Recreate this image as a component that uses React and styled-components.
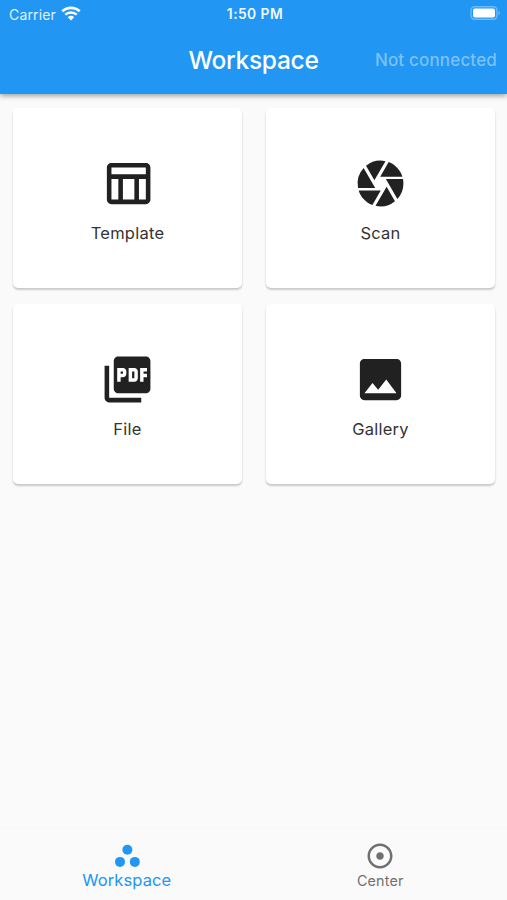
import React from "react";
import styled, { createGlobalStyle } from "styled-components";
import {
  MdOutlineTableChart,
  MdCamera,
  MdPictureAsPdf,
  MdImage,
  MdAdjust,
} from "react-icons/md";

const GlobalStyle = createGlobalStyle`
  * { box-sizing: border-box; }
  body {
    margin: 0;
    background: #fafafa;
    font-family: Inter, "Liberation Sans", sans-serif;
  }
`;

const Screen = styled.div`
  display: flex;
  flex-direction: column;
  width: 100%;
  height: 100vh;
  overflow: hidden;
`;

const Header = styled.header`
  flex: none;
  height: 94px;
  background: #2196f3;
  color: #fff;
  box-shadow: 0 2px 5px rgba(0, 0, 0, 0.36);
`;

const StatusBar = styled.div`
  display: grid;
  grid-template-columns: 1fr auto 1fr;
  align-items: center;
  height: 27px;
  padding: 1px 6px 0 9px;
  font-size: 14px;

  svg {
    margin-bottom: 2px;
  }
`;

const Carrier = styled.div`
  display: flex;
  align-items: center;
  gap: 5px;
  color: #e3f2fe;
  letter-spacing: 0.15px;
`;

const Clock = styled.div`
  color: #f0f8ff;
  font-size: 13.8px;
  font-weight: 600;
  letter-spacing: 0.45px;
`;

const Power = styled.div`
  display: flex;
  justify-content: flex-end;
`;

const TitleBar = styled.div`
  display: grid;
  grid-template-columns: 1fr auto 1fr;
  align-items: center;
  height: 65px;
  padding: 0 10px;
`;

const Title = styled.h1`
  grid-column: 2;
  margin: 0;
  font-size: 24.5px;
  font-weight: 500;
  line-height: 30px;
  letter-spacing: -0.3px;
`;

const Connection = styled.div`
  justify-self: end;
  color: #7dc1f8;
  font-size: 17px;
  font-weight: 500;
  letter-spacing: 0.17px;
  white-space: nowrap;
`;

const Tiles = styled.main`
  flex: 1;
  display: grid;
  grid-template-columns: 1fr 1fr;
  grid-auto-rows: 180px;
  align-content: start;
  gap: 15.5px 24px;
  padding: 14px 12px 0 13px;
`;

const Card = styled.button`
  display: flex;
  flex-direction: column;
  align-items: center;
  border: 0;
  border-radius: 5px;
  padding: 48px 0 0;
  background: #fff;
  color: #212121;
  box-shadow: 0 2px 2px rgba(0, 0, 0, 0.18), 0 1px 3px rgba(0, 0, 0, 0.04);
  font-family: inherit;

  svg {
    width: 55px;
    height: 55px;
  }
`;

const CardLabel = styled.span`
  margin-top: 12px;
  color: #333;
  font-size: 16.5px;
  line-height: 20px;
  letter-spacing: 0.25px;
`;

const TabBar = styled.nav`
  flex: none;
  display: grid;
  grid-template-columns: 1fr 1fr;
  height: 72px;
  border-top: 1px solid #f7f7f7;
  background: #fafafa;
`;

const Tab = styled.button`
  display: flex;
  flex-direction: column;
  align-items: center;
  border: 0;
  padding: 12px 0 0;
  background: none;
  color: ${(p) => (p.$active ? "#2196f3" : "#707070")};
  font-family: inherit;

  svg {
    width: 30px;
    height: 30px;
  }
`;

const TabLabel = styled.span`
  margin-top: ${(p) => (p.$active ? "-2px" : "-1px")};
  font-size: ${(p) => (p.$active ? "16.5px" : "14.3px")};
  line-height: 22px;
  letter-spacing: ${(p) => (p.$active ? "0.1px" : "0.2px")};
`;

const WifiIcon = () => (
  <svg width="20" height="15" viewBox="0 0 20 15" fill="none">
    <path d="M1.3 5.3A12.5 12.5 0 0 1 18.7 5.3" stroke="#fff" strokeWidth="2.7" />
    <path d="M4.3 8.7A8.2 8.2 0 0 1 15.7 8.7" stroke="#fff" strokeWidth="2.5" />
    <path d="M10 14.6 6.8 11.2A4.5 4.5 0 0 1 13.2 11.2Z" fill="#fff" />
  </svg>
);

const BatteryIcon = () => (
  <svg width="31" height="14" viewBox="0 0 31 14" fill="none">
    <rect x="1" y="0.8" width="26" height="12.4" rx="3.6" stroke="#6fbaf7" strokeWidth="1.4" />
    <rect x="3" y="2.5" width="22" height="9" rx="1.8" fill="#fff" />
    <path d="M28.6 4.8a2.6 2.6 0 0 1 0 4.4Z" fill="#84c4f8" />
  </svg>
);

const WorkspacesIcon = () => (
  <svg viewBox="0 0 30 30" fill="currentColor">
    <circle cx="15.4" cy="8.7" r="5" />
    <circle cx="8" cy="20.9" r="5" />
    <circle cx="22.8" cy="20.9" r="5" />
  </svg>
);

const tiles = [
  { label: "Template", Icon: MdOutlineTableChart },
  { label: "Scan", Icon: MdCamera },
  { label: "File", Icon: MdPictureAsPdf },
  { label: "Gallery", Icon: MdImage },
];

export default function App() {
  return (
    <Screen>
      <GlobalStyle />
      <Header>
        <StatusBar>
          <Carrier>
            Carrier
            <WifiIcon />
          </Carrier>
          <Clock>1:50 PM</Clock>
          <Power>
            <BatteryIcon />
          </Power>
        </StatusBar>
        <TitleBar>
          <Title>Workspace</Title>
          <Connection>Not connected</Connection>
        </TitleBar>
      </Header>
      <Tiles>
        {tiles.map(({ label, Icon }) => (
          <Card key={label}>
            <Icon />
            <CardLabel>{label}</CardLabel>
          </Card>
        ))}
      </Tiles>
      <TabBar>
        <Tab $active>
          <WorkspacesIcon />
          <TabLabel $active>Workspace</TabLabel>
        </Tab>
        <Tab>
          <MdAdjust />
          <TabLabel>Center</TabLabel>
        </Tab>
      </TabBar>
    </Screen>
  );
}
